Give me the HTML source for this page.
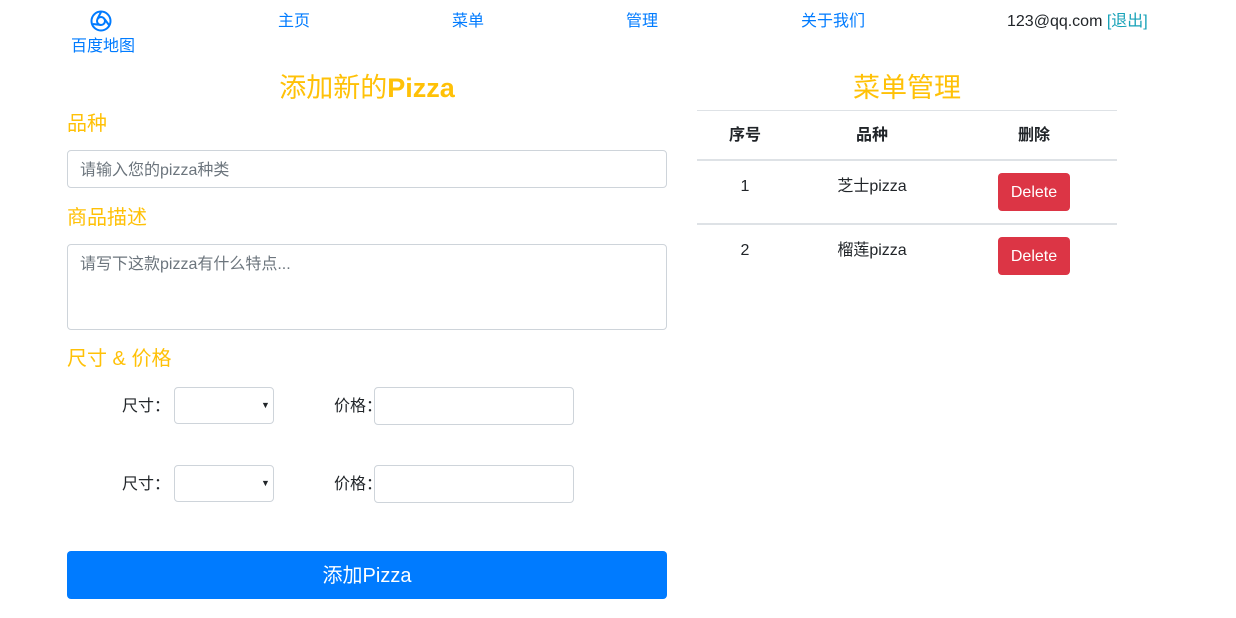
<!DOCTYPE html>
<html><head><meta charset="utf-8"><style>
*{margin:0;padding:0;box-sizing:border-box}
body{width:1236px;height:618px;background:#fff;font-family:"Liberation Sans","Noto Sans CJK SC",sans-serif;color:#212529;font-size:16px;position:relative;overflow:hidden}
.a{position:absolute;white-space:nowrap;line-height:1}
.blue{color:#007bff}.y{color:#ffc107}
.c{transform:translateX(-50%)}
.box{position:absolute;border:1px solid #ced4da;border-radius:4px;background:#fff}
.ph{color:#6c757d;font-size:16px}
.del{position:absolute;left:998px;width:72px;height:38px;background:#dc3545;border-radius:4px;color:#fff;font-size:16px;line-height:40px;text-align:center}
.hl{position:absolute;left:697px;width:420px;background:#dee2e6}
</style></head><body>
<svg class="a" style="left:90px;top:10px" width="22" height="22" viewBox="0 0 22 22" fill="none" stroke="#007bff" stroke-width="2"><circle cx="11" cy="11" r="9.5"/><circle cx="11" cy="11" r="4"/><path d="M7.5 9L11 2M14.5 9L19 15M11 15L3 14"/></svg>
<div class="a blue c" style="left:103px;top:39px">百度地图</div>
<div class="a blue c" style="left:294px;top:14px">主页</div>
<div class="a blue c" style="left:468px;top:14px">菜单</div>
<div class="a blue c" style="left:642px;top:14px">管理</div>
<div class="a blue c" style="left:833px;top:14px">关于我们</div>
<div class="a" style="left:1007px;top:14px">123@qq.com <span style="color:#17a2b8">[退出]</span></div>

<div class="a y c" style="left:367px;top:75px;font-size:27px">添加新的<b>Pizza</b></div>
<div class="a y" style="left:67px;top:114px;font-size:20px">品种</div>
<div class="box" style="left:67px;top:150px;width:600px;height:38px"><span class="a ph" style="left:12px;top:12px">请输入您的pizza种类</span></div>
<div class="a y" style="left:67px;top:208px;font-size:20px">商品描述</div>
<div class="box" style="left:67px;top:244px;width:600px;height:86px"><span class="a ph" style="left:12px;top:12px">请写下这款pizza有什么特点...</span></div>
<div class="a y" style="left:67px;top:349px;font-size:20px">尺寸 &amp; 价格</div>

<div class="a" style="left:122px;top:399px">尺寸：</div>
<div class="box" style="left:174px;top:387px;width:100px;height:37px"><span class="a" style="left:86px;top:13px;font-size:9px">▼</span></div>
<div class="a" style="left:334px;top:399px">价格：</div>
<div class="box" style="left:374px;top:387px;width:200px;height:38px"></div>

<div class="a" style="left:122px;top:477px">尺寸：</div>
<div class="box" style="left:174px;top:465px;width:100px;height:37px"><span class="a" style="left:86px;top:13px;font-size:9px">▼</span></div>
<div class="a" style="left:334px;top:477px">价格：</div>
<div class="box" style="left:374px;top:465px;width:200px;height:38px"></div>

<div class="a" style="left:67px;top:551px;width:600px;height:48px;background:#007bff;border-radius:4px;color:#fff;font-size:20px;line-height:51px;text-align:center">添加Pizza</div>

<div class="a y c" style="left:907px;top:75px;font-size:27px">菜单管理</div>
<div class="hl" style="top:110px;height:1px"></div>
<div class="a c" style="left:745px;top:128px;font-weight:bold">序号</div>
<div class="a c" style="left:872px;top:128px;font-weight:bold">品种</div>
<div class="a c" style="left:1034px;top:128px;font-weight:bold">删除</div>
<div class="hl" style="top:159px;height:2px"></div>
<div class="a c" style="left:745px;top:179px">1</div>
<div class="a c" style="left:872px;top:179px">芝士pizza</div>
<div class="del" style="top:173px">Delete</div>
<div class="hl" style="top:223px;height:2px"></div>
<div class="a c" style="left:745px;top:243px">2</div>
<div class="a c" style="left:872px;top:243px">榴莲pizza</div>
<div class="del" style="top:237px">Delete</div>
</body></html>
